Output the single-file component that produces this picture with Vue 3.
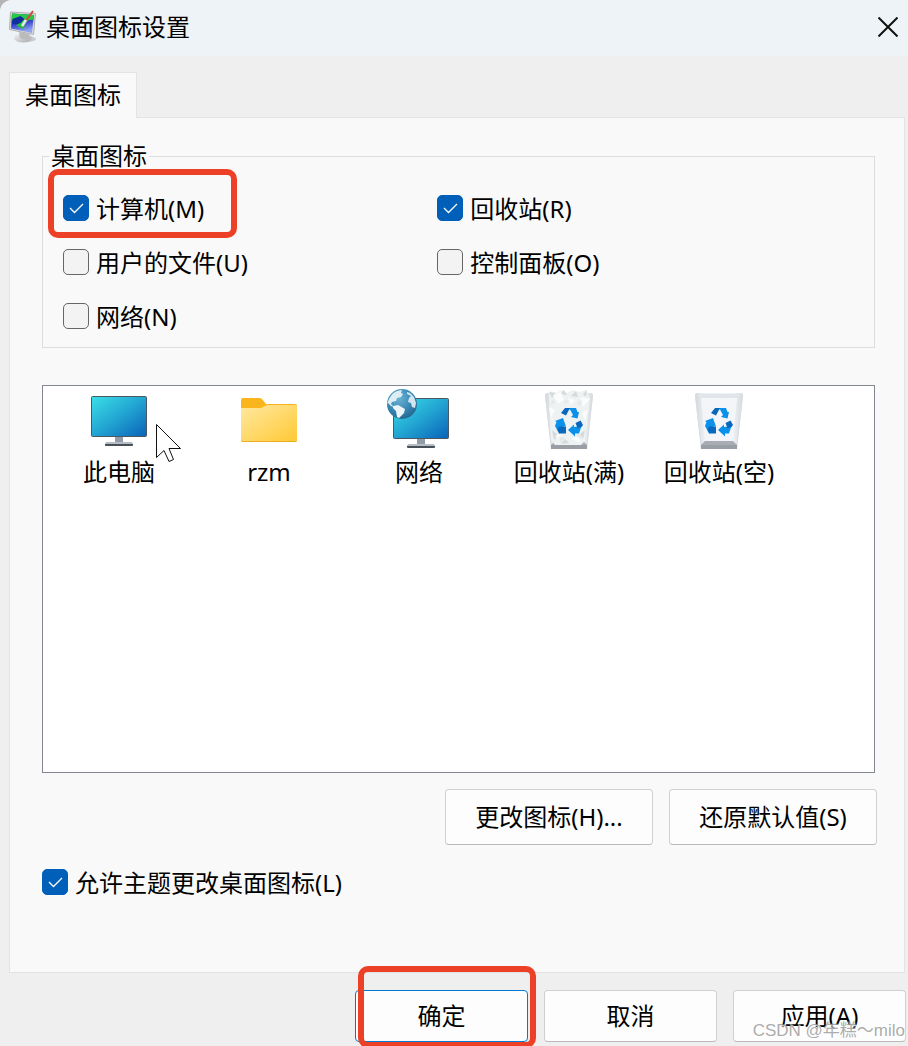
<script setup>
import { ref } from 'vue'

const opcoes = ref([
  { id: 'computer', label: '计算机(M)', checked: true, marked: true },
  { id: 'recycle', label: '回收站(R)', checked: true },
  { id: 'files', label: '用户的文件(U)', checked: false },
  { id: 'control', label: '控制面板(O)', checked: false },
  { id: 'network', label: '网络(N)', checked: false }
])

const permitir = ref(true)

const icones = [
  { id: 'pc', label: '此电脑' },
  { id: 'folder', label: 'rzm' },
  { id: 'net', label: '网络' },
  { id: 'full', label: '回收站(满)' },
  { id: 'empty', label: '回收站(空)' }
]
</script>

<template>
  <div class="window">
    <header class="titlebar">
      <svg class="logo" viewBox="0 0 30 34" aria-hidden="true">
        <defs>
          <linearGradient id="logoBlue" x1="0" y1="0" x2="0.3" y2="1">
            <stop offset="0" stop-color="#1d3fc0" />
            <stop offset="0.5" stop-color="#2430c8" />
            <stop offset="1" stop-color="#8fa4ee" />
          </linearGradient>
          <linearGradient id="logoBase" x1="0" y1="0" x2="1" y2="1">
            <stop offset="0" stop-color="#f4f4f4" />
            <stop offset="1" stop-color="#a9a9a9" />
          </linearGradient>
        </defs>
        <ellipse cx="19" cy="29" rx="9" ry="3" fill="#c9cdd1" />
        <ellipse cx="15" cy="28" rx="9" ry="4.5" fill="url(#logoBase)" />
        <path d="M11 22l10 2 1 5q-6 2-10-1z" fill="#b9bbbd" />
        <path d="M2.500 2l25 1.500-2 21-24-5z" fill="#dcdddd" stroke="#aeb0b1" />
        <path d="M4 3.500l22 1.500-2 18-21-4.500z" fill="url(#logoBlue)" />
        <path d="M4 3.500l22 1.500-.500 5q-4-1-7 2l-2 3-5-1-4-4-4 1z" fill="#28c844" />
        <path d="M4.500 9l8-3 4 3-3 3 1 4-5-1-5.500-2z" fill="#102f9c" />
        <path d="M8 15l6-3 3 4-3 3-3-2z" fill="#25bb40" />
        <path d="M25 1l-7 10" stroke="#d44a36" stroke-width="2" />
        <path d="M18 10l-4 6" stroke="#e8e9ee" stroke-width="2.500" />
      </svg>
      <h1>桌面图标设置</h1>
      <button class="close" type="button" aria-label="关闭">
        <svg viewBox="0 0 20 20">
          <path d="M.500.500l19 19M19.500.500l-19 19" stroke="#111" stroke-width="2" />
        </svg>
      </button>
    </header>

    <main class="content">
      <div class="tabs" role="tablist">
        <button class="tab" type="button" role="tab" aria-selected="true">桌面图标</button>
      </div>

      <section class="panel">
        <fieldset class="group">
          <legend>桌面图标</legend>
          <div class="options">
            <div v-for="opcao in opcoes" :key="opcao.id" class="option">
              <label class="check" :for="opcao.id">
                <span class="box">
                  <input :id="opcao.id" v-model="opcao.checked" type="checkbox" />
                  <svg v-if="opcao.checked" viewBox="0 0 26 26">
                    <path d="M7 13l4.500 4.500L20 9" />
                  </svg>
                </span>
                <span class="caption">{{ opcao.label }}</span>
              </label>
              <span v-if="opcao.marked" class="mark mark-option"></span>
            </div>
          </div>
        </fieldset>

        <div class="list">
          <div v-for="icone in icones" :key="icone.id" class="item">
            <svg class="icon" viewBox="0 0 64 64" aria-hidden="true">
              <defs>
                <linearGradient :id="icone.id + 'Screen'" x1="0" y1="0" x2="1" y2="1">
                  <stop offset="0" stop-color="#3be0e8" />
                  <stop offset="0.5" stop-color="#22a5d2" />
                  <stop offset="1" stop-color="#0a62b8" />
                </linearGradient>
                <linearGradient :id="icone.id + 'Folder'" x1="0" y1="0" x2="1" y2="1">
                  <stop offset="0" stop-color="#ffe8a1" />
                  <stop offset="1" stop-color="#ffc933" />
                </linearGradient>
                <linearGradient :id="icone.id + 'Bin'" x1="0" y1="0" x2="1" y2="0">
                  <stop offset="0" stop-color="#d3d7dc" />
                  <stop offset="0.200" stop-color="#eceff3" />
                  <stop offset="0.800" stop-color="#edf0f4" />
                  <stop offset="1" stop-color="#d5d9dd" />
                </linearGradient>
                <radialGradient :id="icone.id + 'Globe'" cx="0.400" cy="0.300" r="0.750">
                  <stop offset="0" stop-color="#6db4d6" />
                  <stop offset="0.600" stop-color="#3686b3" />
                  <stop offset="1" stop-color="#23648c" />
                </radialGradient>
              </defs>

              <g v-if="icone.id === 'pc' || icone.id === 'net'" :transform="icone.id === 'net' ? 'translate(2 2)' : null">
                <path d="M28 49h8v6h-8z" fill="#929ba7" />
                <path d="M19 54h26l1 2H18z" fill="#b4bdc6" />
                <path d="M18 56h28v1q0 1-1 1H19q-1 0-1-1z" fill="#484f57" />
                <rect x="4.500" y="8.500" width="55" height="40" rx="1" :fill="`url(#${icone.id}Screen)`" stroke="#4a5864" />
              </g>

              <g v-if="icone.id === 'net'">
                <circle cx="15" cy="16" r="15" fill="url(#netGlobe)" />
                <path d="M2 11q3-6 8-8l5-1-1 3 2 1-2 3-4 1-1 3-4 1-1 2 3 3-3-1-3-3-1 1z" fill="#dcedf3" />
                <path d="M6 18l5-1 7 4-1 4-5 5-2-1-1-6-3-3z" fill="#eaf4f6" />
                <path d="M20 4l3 1 4 4 2 6-1 5-3-1-1-4-3-1 1-4 2-2-4-2z" fill="#d2e5ee" />
              </g>

              <g v-if="icone.id === 'folder'">
                <path d="M4 12q0-2 2-2h16q2 0 3 1l4 5h29q2 0 2 2v20H4z" fill="#f9b51b" />
                <path d="M4 20h19q2 0 3-1l4-2h28q2 0 2 2v33q0 2-2 2H6q-2 0-2-2z" fill="url(#folderFolder)" />
                <path d="M4 51q0 2 2 2h52q2 0 2-2v1q0 2-2 2H6q-2 0-2-2z" fill="#edae24" />
              </g>

              <g v-if="icone.id === 'full' || icone.id === 'empty'">
                <path d="M8 7q0-2 2-2h44q2 0 2 2l-6 54H14z" :fill="`url(#${icone.id}Bin)`" />
                <path d="M10 6h44l-4 4H14z" fill="#e2e5e9" />
                <path d="M14 10h36l-4 44H18z" fill="#f3f5f9" />
                <path d="M8.500 8l6 53M55.500 8l-6 53" stroke="#dadee2" fill="none" />
                <path d="M18 53h28l4 4v4H14v-4z" fill="#a9adb3" />
                <path d="M14 57h36v4H14z" fill="#9a9fa6" />
                <g v-if="icone.id === 'full'">
                  <path d="M12 8l1-5 6 2 6-3 4 3 7-3 6 2 7-2 2 5 2 3-5 43-4 4H18l-4-5z" fill="#eff2f2" />
                  <path d="M12 4l7 1-4 5zM23 6l4-4 3 5zM34 8l5-5 2 6zM46 6l4-4-1 7zM15 42l6 5-4 5zM43 46l5-4-2 9zM28 51l4 4-8 1z" fill="#d5dada" />
                  <path d="M16 7l8-3 3 8-6 4zM31 10l7 2-4 5zM43 9l10 2-7 8zM12 19l6 3-4 8zM45 24l6-2-3 11zM18 48l5-3 4 8zM34 51l7-3 3 7z" fill="#fbfcfc" />
                  <path d="M26 13l6-1-3 4zM39 15l6-3-2 6zM15 12l4 2-5 3zM22 48l6 2-4 5zM39 48l3-2 3 5z" fill="#e4e8e8" />
                  <path d="M14 57h36v4H14z" fill="#9a9fa6" />
                </g>
                <path d="M28 20h11l1.500 4H42l-1.500 6.500L34 29l2-2-3-5.500zM18 33l8-3 3 8.500-2-.500-4 7.500h-1L18 38l1.500-4zM44.500 38L42 45.500h-4v3L31 42l6-5.500V39z" fill="#0b91e9" />
                <path d="M24 25l4-5h5l-4 7.500zM22 38.500h7v7h-6.500L20.500 42zM38.500 35l5-2.500L46 37l-1.500 2-4 1z" fill="#0868bd" />
              </g>
            </svg>
            <span>{{ icone.label }}</span>
          </div>
          <svg class="cursor" viewBox="0 0 26 40" aria-hidden="true">
            <path d="M.500.500v33l7.500-7 5 11 4.500-2-4.500-11h11.500z" fill="#fff" stroke="#111" />
          </svg>
        </div>

        <div class="actions">
          <button class="btn" type="button">更改图标(H)...</button>
          <button class="btn" type="button">还原默认值(S)</button>
        </div>

        <label class="check allow" for="allow">
          <span class="box">
            <input id="allow" v-model="permitir" type="checkbox" />
            <svg v-if="permitir" viewBox="0 0 26 26">
              <path d="M7 13l4.500 4.500L20 9" />
            </svg>
          </span>
          <span class="caption">允许主题更改桌面图标(L)</span>
        </label>
      </section>
    </main>

    <footer class="footer">
      <div class="ok">
        <button class="btn primary" type="button">确定</button>
        <span class="mark mark-ok"></span>
      </div>
      <button class="btn" type="button">取消</button>
      <button class="btn" type="button">应用(A)</button>
    </footer>
    <span class="watermark">CSDN @年糕～milo</span>
  </div>
</template>

<style>
body {
  margin: 0;
  background: #b5b5b5;
}
</style>

<style scoped>
.window {
  position: relative;
  display: flex;
  flex-direction: column;
  box-sizing: border-box;
  min-height: 100vh;
  overflow: hidden;
  border-top-left-radius: 12px;
  background: #efefef;
  color: #000;
  font-family: "Noto Sans", "Noto Sans CJK SC", sans-serif;
  font-size: 24px;
  line-height: 32px;
}

button {
  padding: 0;
  font: inherit;
  color: inherit;
}

.titlebar {
  display: flex;
  align-items: center;
  box-sizing: border-box;
  height: 56px;
  padding: 0 10px 2px 8px;
  background: #eef3f8;
}

.logo {
  width: 30px;
  height: 34px;
}

h1 {
  flex: 1;
  margin: 0 0 0 8px;
  font-size: 24px;
  font-weight: 400;
}

.close {
  display: flex;
  border: none;
  background: none;
}

.close svg {
  width: 20px;
  height: 20px;
}

.content {
  display: flex;
  flex: 1;
  flex-direction: column;
  padding: 16px 3px 0 9px;
}

.tabs {
  display: flex;
}

.tab {
  position: relative;
  z-index: 1;
  height: 46px;
  margin-bottom: -1px;
  padding: 0 15px 2px;
  border: 1px solid #e3e3e3;
  border-bottom: none;
  background: #f9f9f9;
}

.panel {
  display: flex;
  flex: 1;
  flex-direction: column;
  padding: 22px 29px 73px 32px;
  border: 1px solid #e3e3e3;
  background: #f9f9f9;
}

.group {
  min-width: 0;
  margin: 0;
  padding: 9px 0 4px 20px;
  border: 1px solid #dcdcdc;
}

legend {
  margin-left: -14px;
  padding: 0 2px;
}

.options {
  display: grid;
  grid-template-columns: 6fr 7fr;
  grid-auto-rows: 54px;
}

.option {
  position: relative;
  display: flex;
  align-items: center;
}

.check {
  display: flex;
  align-items: center;
  gap: 7px;
}

.caption {
  padding-top: 2px;
}

.box {
  display: grid;
  width: 26px;
  height: 26px;
}

.box input,
.box svg {
  grid-area: 1 / 1;
  width: 26px;
  height: 26px;
  margin: 0;
}

.box input {
  appearance: none;
  box-sizing: border-box;
  border: 1px solid #666;
  border-radius: 5px;
  background: #f3f3f3;
}

.box input:checked {
  border-color: #005fb8;
  background: #005fb8;
}

.box svg {
  pointer-events: none;
  fill: none;
  stroke: #fff;
  stroke-width: 1.3;
}

.mark {
  position: absolute;
  z-index: 2;
  box-sizing: border-box;
  border: 6px solid #ec4027;
  border-radius: 10px;
  pointer-events: none;
}

.mark-option {
  top: -12px;
  left: -15px;
  width: 189px;
  height: 69px;
}

.mark-ok {
  top: -24px;
  left: 3px;
  width: 178px;
  height: 82px;
}

.list {
  position: relative;
  display: flex;
  flex: 1;
  flex-wrap: wrap;
  align-content: flex-start;
  margin-top: 37px;
  padding: 2px 1px;
  border: 1px solid #828790;
  background: #fff;
}

.item {
  display: flex;
  flex-direction: column;
  align-items: center;
  gap: 4px;
  width: 150px;
}

.icon {
  width: 64px;
  height: 64px;
}

.cursor {
  position: absolute;
  top: 38px;
  left: 113px;
  width: 26px;
  height: 40px;
}

.actions {
  display: flex;
  justify-content: flex-end;
  gap: 16px;
  margin: 16px -2px 0 0;
}

.btn {
  box-sizing: border-box;
  width: 208px;
  height: 56px;
  border: 1px solid #d0d0d0;
  border-bottom-color: #bababa;
  border-radius: 4px;
  background: #fdfdfd;
}

.allow {
  align-self: flex-start;
  margin-top: 20px;
}

.footer {
  display: flex;
  justify-content: flex-end;
  gap: 16px;
  padding: 17px 2px 4px;
}

.footer .btn {
  width: 173px;
  height: 52px;
}

.footer .primary {
  border-color: #0078d4;
}

.ok {
  position: relative;
  display: flex;
}

.watermark {
  position: absolute;
  right: 3px;
  bottom: 3px;
  color: rgba(150, 150, 150, 0.8);
  font-family: "Liberation Sans", "Noto Sans CJK SC", sans-serif;
  font-size: 17px;
  line-height: 24px;
  text-shadow: 1px 1px 1px #fff;
}
</style>
